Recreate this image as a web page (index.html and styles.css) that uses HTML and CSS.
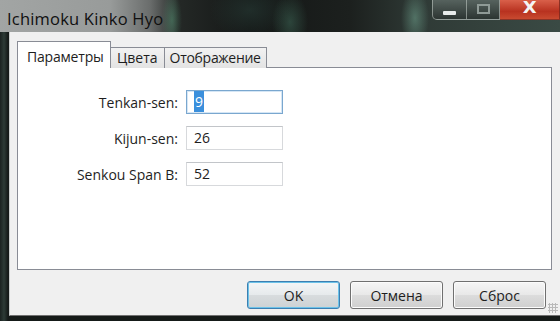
FILE: index.html
```html
<!DOCTYPE html>
<html>
<head>
<meta charset="utf-8">
<link rel="stylesheet" href="styles.css">
</head>
<body>
<div class="window">
  <div class="titlebar">
    <div class="title">Ichimoku Kinko Hyo</div>
    <div class="caption">
      <div class="cbtn cmin"><span class="minbar"></span></div>
      <div class="cbtn cmax"><span class="maxbox"></span></div>
      <div class="cbtn cclose"><span class="x">X</span></div>
    </div>
  </div>
  <div class="frame">
    <div class="client">
      <div class="tabs">
        <div class="tab active">Параметры</div>
        <div class="tab">Цвета</div>
        <div class="tab">Отображение</div>
      </div>
      <div class="panel">
        <div class="form">
          <label class="lbl">Tenkan-sen:</label>
          <div class="input focus"><span class="sel">9</span></div>
          <label class="lbl">Kijun-sen:</label>
          <div class="input">26</div>
          <label class="lbl">Senkou Span B:</label>
          <div class="input">52</div>
        </div>
      </div>
      <div class="buttons">
        <div class="btn default">OK</div>
        <div class="btn">Отмена</div>
        <div class="btn">Сброс</div>
      </div>
      <div class="grip"></div>
    </div>
  </div>
</div>
</body>
</html>
```
FILE: styles.css
```css
html, body {
  margin: 0;
  padding: 0;
}
body {
  width: 560px;
  height: 321px;
  overflow: hidden;
  background: #1a1d1c;
  font-family: "Open Sans", "Noto Sans", sans-serif;
  font-size: 14px;
  color: #1e1e1e;
}
.window {
  display: flex;
  flex-direction: column;
  width: 560px;
  height: 321px;
}
.titlebar {
  height: 32px;
  display: flex;
  align-items: flex-start;
  background:
    radial-gradient(ellipse 10px 30px at 172px 20px, rgba(80,140,110,0.55), transparent),
    radial-gradient(ellipse 18px 30px at 290px 22px, rgba(70,120,100,0.45), transparent),
    radial-gradient(ellipse 14px 30px at 415px 18px, rgba(110,160,140,0.55), transparent),
    radial-gradient(ellipse 40px 30px at 250px 10px, rgba(40,60,55,0.6), transparent),
    linear-gradient(90deg, #a2a5a4 0px, #989b9a 110px, #6a6d6c 150px, #242826 178px, #141716 250px, #1c201e 350px, #2f3a36 420px, #3a4a44 560px);
  flex-shrink: 0;
}
.title {
  padding: 7px 0 0 7px;
  font-size: 16.5px;
  color: #101010;
  letter-spacing: 0.2px;
}
.caption {
  margin-left: auto;
  display: flex;
  height: 20px;
}
.cbtn {
  height: 19px;
  display: flex;
  align-items: center;
  justify-content: center;
  border: 1px solid rgba(200,210,205,0.55);
  border-top: none;
}
.cmin {
  width: 33px;
  border-radius: 0 0 0 5px;
  background: linear-gradient(#56625e, #2c3532);
}
.cmax {
  width: 32px;
  border-left: none;
  background: linear-gradient(#56625e, #2c3532);
}
.cclose {
  width: 59px;
  border-left: none;
  background: linear-gradient(#d9604a, #b83220 60%, #c84a30);
  border-color: rgba(120,40,30,0.8);
}
.minbar {
  width: 13px;
  height: 4px;
  background: #e8eceb;
  margin-top: 6px;
  border-radius: 1px;
}
.maxbox {
  width: 9px;
  height: 6px;
  border: 2px solid #8f9a96;
  margin-top: -2px;
}
.x {
  font-family: "DejaVu Sans", sans-serif;
  font-weight: bold;
  color: #f4f4f4;
  font-size: 15px;
  line-height: 14px;
  margin-top: -3px;
  transform: scaleX(1.2);
}
.frame {
  flex: 1;
  display: flex;
  flex-direction: column;
  padding: 0 0 5px 9px;
  background: linear-gradient(90deg, #1b2220 0, #2d3b36 4px, #151a18 8px, #151a18 100%);
}
.client {
  flex: 1;
  position: relative;
  background: #f0f0f0;
  border-left: 1px solid #c9cccb;
  border-bottom: 1px solid #707070;
  padding: 10px 8px 0 7px;
  display: flex;
  flex-direction: column;
}
.tabs {
  display: flex;
  align-items: flex-end;
  height: 26px;
  margin-bottom: -1px;
  position: relative;
  z-index: 1;
}
.tab {
  height: 20px;
  padding: 0 6px;
  line-height: 20px;
  border: 1px solid #898c95;
  border-bottom: none;
  background: linear-gradient(#f2f2f2, #e3e3e3);
  margin-left: -1px;
  font-size: 14px;
}
.tab:last-child {
  letter-spacing: -0.3px;
  padding: 0 5px;
}
.tab.active {
  height: 26px;
  line-height: 30px;
  padding: 0 9px 0 9px;
  background: #ffffff;
  margin-left: 0;
  width: 74px;
  letter-spacing: -0.2px;
  position: relative;
  z-index: 2;
}
.panel {
  height: 201px;
  background: #ffffff;
  border: 1px solid #898c95;
}
.form {
  display: grid;
  grid-template-columns: 160px 97px;
  column-gap: 8px;
  row-gap: 12px;
  padding-top: 22px;
  align-items: center;
}
.lbl {
  text-align: right;
  font-size: 14px;
  color: #1e1e1e;
}
.input {
  height: 22px;
  border: 1px solid #d7d9dc;
  border-top-color: #c2c5c9;
  background: #fff;
  padding-left: 7px;
  line-height: 22px;
  font-size: 14px;
}
.input.focus {
  border-color: #7aa7cf;
  box-shadow: inset 0 0 0 1px #d5e6f5;
}
.sel {
  background: #3a8fdc;
  color: #fff;
  padding: 1px 1px;
}
.buttons {
  display: flex;
  justify-content: flex-end;
  gap: 10px;
  margin-top: 11px;
  padding-right: 6px;
}
.btn {
  width: 91px;
  height: 26px;
  border: 1px solid #707070;
  border-radius: 3px;
  background: linear-gradient(#f6f6f6 0, #e8e8e8 50%, #dcdcdc 51%, #cfcfcf 100%);
  display: flex;
  align-items: center;
  justify-content: center;
  font-size: 14px;
  color: #1e1e1e;
  box-shadow: inset 0 0 0 1px #fcfcfc;
}
.btn.default {
  border-color: #3c7fb1;
  box-shadow: inset 0 0 0 1px #6cc2e8;
  background: linear-gradient(#f4f6f7 0, #e6eaec 50%, #d8dcde 51%, #cdd2d4 100%);
}
.grip {
  position: absolute;
  right: 2px;
  bottom: 2px;
  width: 10px;
  height: 10px;
  background-image: radial-gradient(circle, #b9b9b9 1px, transparent 1.2px);
  background-size: 3px 3px;
}
```
